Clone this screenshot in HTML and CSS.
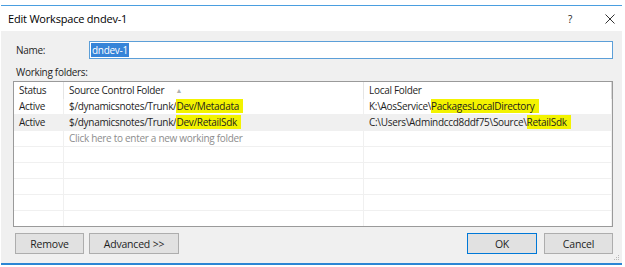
FILE: index.html
```html
<!DOCTYPE html>
<html lang="en">
<head>
    <meta charset="UTF-8">
    <title>Edit Workspace dndev-1</title>
    <link rel="stylesheet" href="styles.css">
</head>
<body>
    <div class="window">
        <div class="titlebar">
            <span class="title">Edit Workspace dndev-1</span>
            <span class="help">?</span>
            <span class="close">
                <svg width="10" height="10" viewBox="0 0 10 10"><path d="M0.5 0.5 L9.5 9.5 M9.5 0.5 L0.5 9.5" stroke="#333" stroke-width="1" fill="none"/></svg>
            </span>
        </div>
        <div class="content">
            <div class="name-row">
                <label class="name-label">Name:</label>
                <div class="name-input"><span class="selected">dndev-1</span></div>
            </div>
            <div class="section-label">Working folders:</div>
            <div class="grid">
                <table>
                    <thead>
                        <tr>
                            <th class="col-status">Status</th>
                            <th class="col-source">Source Control Folder <span class="sort">&#9650;</span></th>
                            <th class="col-local">Local Folder</th>
                        </tr>
                    </thead>
                    <tbody>
                        <tr>
                            <td>Active</td>
                            <td>$/dynamicsnotes/Trunk/<mark>Dev/Metadata</mark></td>
                            <td>K:\AosService\<mark>PackagesLocalDirectory</mark></td>
                        </tr>
                        <tr class="current">
                            <td>Active</td>
                            <td>$/dynamicsnotes/Trunk/<mark>Dev/RetailSdk</mark></td>
                            <td>C:\Users\Admindccd8ddf75\Source\<mark>RetailSdk</mark></td>
                        </tr>
                        <tr>
                            <td></td>
                            <td class="hint">Click here to enter a new working folder</td>
                            <td></td>
                        </tr>
                        <tr><td></td><td></td><td></td></tr>
                        <tr><td></td><td></td><td></td></tr>
                        <tr><td></td><td></td><td></td></tr>
                        <tr><td></td><td></td><td></td></tr>
                        <tr><td></td><td></td><td></td></tr>
                    </tbody>
                </table>
            </div>
            <div class="buttons">
                <button class="btn btn-remove">Remove</button>
                <button class="btn btn-advanced">Advanced &gt;&gt;</button>
                <span class="spacer"></span>
                <button class="btn btn-ok">OK</button>
                <button class="btn btn-cancel">Cancel</button>
            </div>
            <span class="grip">
                <svg width="6" height="6" viewBox="0 0 6 6"><rect x="4" y="0" width="1" height="1" fill="#b8b8b8"/><rect x="2" y="2" width="1" height="1" fill="#b8b8b8"/><rect x="4" y="2" width="1" height="1" fill="#b8b8b8"/><rect x="0" y="4" width="1" height="1" fill="#b8b8b8"/><rect x="2" y="4" width="1" height="1" fill="#b8b8b8"/><rect x="4" y="4" width="1" height="1" fill="#b8b8b8"/></svg>
            </span>
        </div>
    </div>
</body>
</html>
```

FILE: styles.css
```css
body {
    margin: 0;
    background-color: #ffffff;
    font-family: "Open Sans", "Noto Sans", sans-serif;
    font-size: 10px;
    letter-spacing: -0.3px;
    color: #1e1e1e;
}
.window {
    margin: 5px 3px 0 1px;
    border-top: 1px solid #4a9ee0;
    border-bottom: 2px solid #2b86d4;
    background-color: #f0f0f0;
}
.titlebar {
    height: 25px;
    background-color: #ffffff;
    display: flex;
    align-items: center;
    padding-left: 7px;
}
.title {
    flex: 1;
    font-size: 11px;
    letter-spacing: -0.2px;
    color: #000;
}
.help {
    width: 37px;
    color: #222;
}
.close {
    width: 17px;
    display: flex;
    align-items: center;
}
.content {
    position: relative;
    padding: 10px 9px 9px 12px;
}
.name-row {
    display: flex;
    align-items: center;
    height: 18px;
}
.name-label {
    width: 73px;
    padding-left: 3px;
}
.name-input {
    flex: 1;
    height: 16px;
    border: 1px solid #5c9fd8;
    background-color: #ffffff;
    display: flex;
    align-items: center;
    padding-left: 1px;
}
.selected {
    background-color: #3584d8;
    color: #ffffff;
    line-height: 14px;
    padding: 0 1px;
}
.section-label {
    margin-top: 5px;
    padding-left: 3px;
    height: 17px;
    line-height: 17px;
}
.grid {
    border: 1px solid #9a9a9a;
    background-color: #ffffff;
    height: 144px;
    overflow: hidden;
}
table {
    border-collapse: collapse;
    width: 598px;
    table-layout: fixed;
}
th, td {
    text-align: left;
    font-weight: normal;
    white-space: nowrap;
    padding: 0 0 0 5px;
    height: 15px;
    line-height: 15px;
    border-bottom: 1px solid #f0f0f0;
    border-right: 1px solid #f0f0f0;
}
th {
    height: 17px;
    line-height: 17px;
    border-bottom: none;
    border-right: 1px solid #e5e5e5;
}
.col-status {
    width: 44px;
}
.col-source {
    width: 294px;
}
.col-local {
    border-right: 1px solid #d8d8d8;
}
.sort {
    font-size: 7px;
    color: #b0b0b0;
    margin-left: 9px;
    vertical-align: 1px;
}
mark {
    background-color: #f3f300;
    color: #1e1e1e;
    padding-right: 4px;
}
.current td {
    background-color: #f0f0f0;
}
.hint {
    color: #8d8d8d;
}
.buttons {
    display: flex;
    gap: 5px;
    margin-top: 6px;
}
.spacer {
    flex: 1;
}
.btn {
    height: 21px;
    border: 1px solid #adadad;
    background-color: #e1e1e1;
    font-family: "Open Sans", "Noto Sans", sans-serif;
    font-size: 10.5px;
    letter-spacing: -0.2px;
    color: #1e1e1e;
    padding: 0;
}
.btn-remove {
    width: 69px;
    margin-left: 2px;
}
.btn-advanced {
    width: 90px;
}
.btn-ok {
    width: 70px;
    border: 1px solid #0078d7;
    margin-right: 2px;
}
.btn-cancel {
    width: 69px;
}
.grip {
    position: absolute;
    right: 2px;
    bottom: 2px;
    line-height: 0;
}
```
